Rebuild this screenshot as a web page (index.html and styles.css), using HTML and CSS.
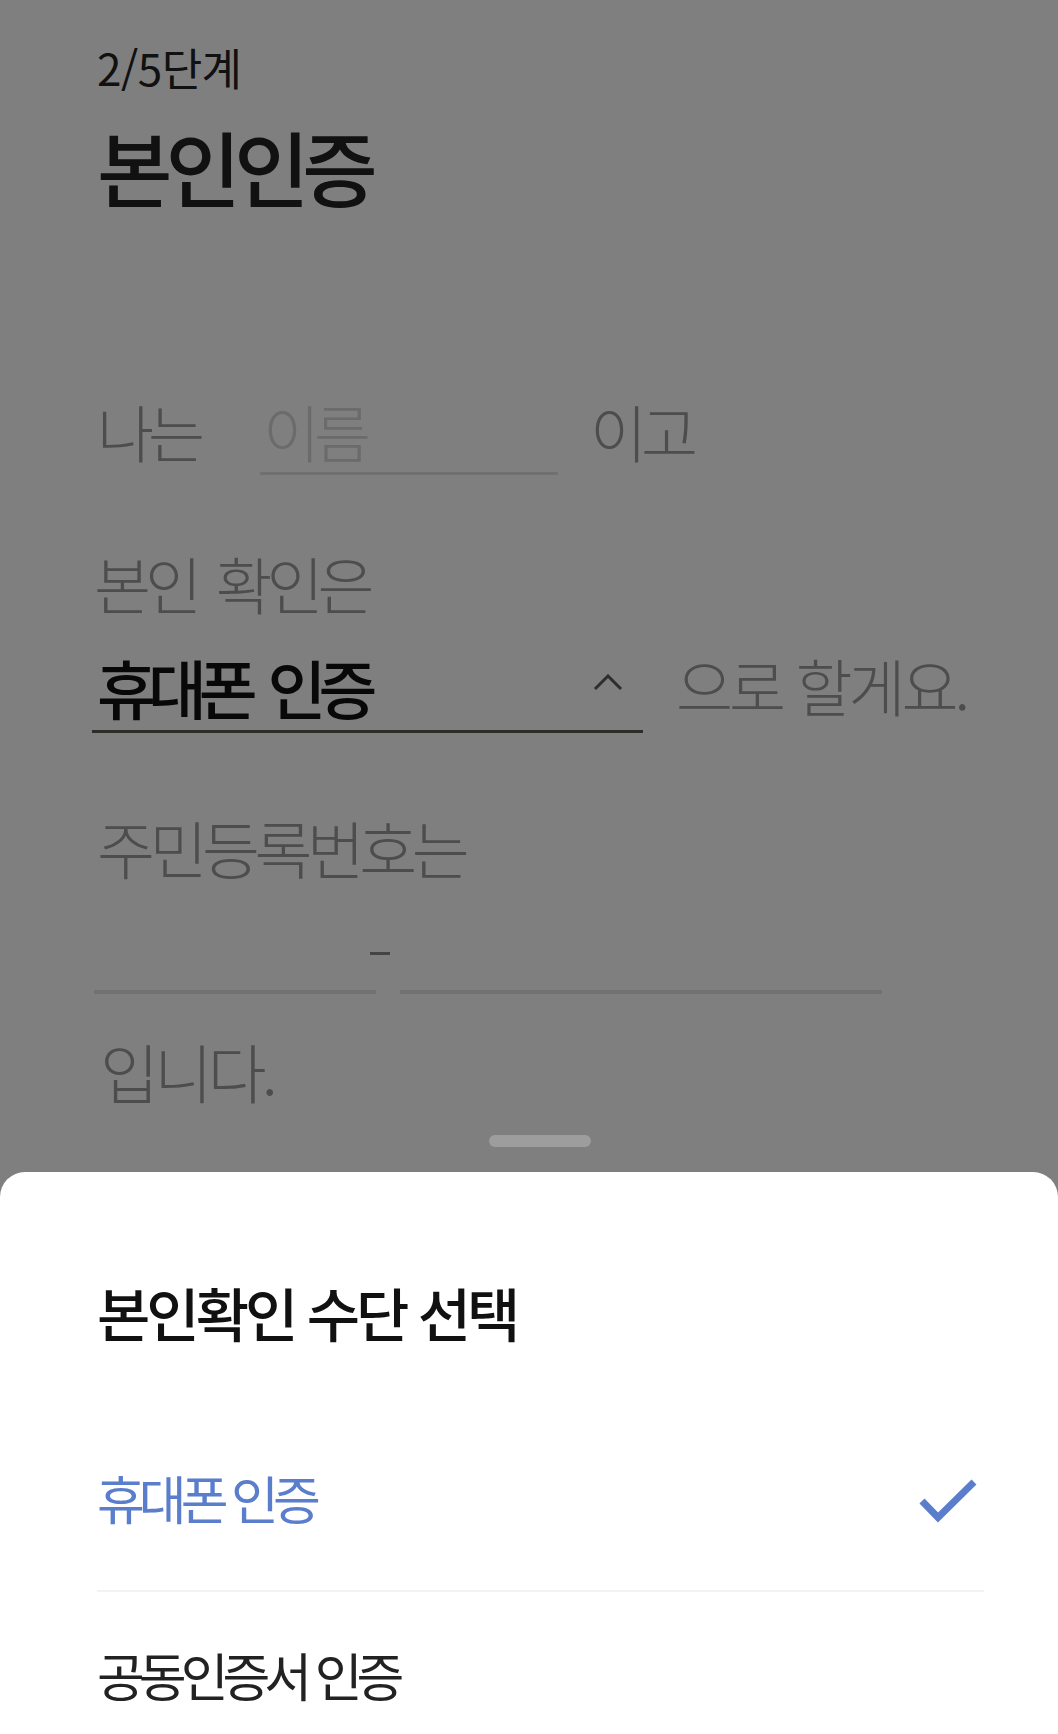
FILE: index.html
```html
<!DOCTYPE html>
<html lang="ko">
<head>
<meta charset="utf-8">
<title>본인인증</title>
<link rel="stylesheet" href="styles.css">
</head>
<body>
<main class="form">
  <div class="step">2/5단계</div>
  <h1 class="title">본인인증</h1>

  <div class="row row-name">
    <span class="label lead">나는</span>
    <div class="field name-field"><span class="placeholder">이름</span></div>
    <span class="label after-name">이고</span>
  </div>

  <div class="label label-method">본인 확인은</div>

  <div class="row row-method">
    <div class="select">
      <span class="select-value">휴대폰 인증</span>
      <svg class="chevron" width="32" height="18" viewBox="0 0 32 18" aria-hidden="true">
        <polyline points="3,15 16,2 29,15" fill="none" stroke="currentColor" stroke-width="3" stroke-linecap="butt" stroke-linejoin="miter"/>
      </svg>
    </div>
    <span class="label after-select">으로 할게요.</span>
  </div>

  <div class="label label-rrn">주민등록번호는</div>

  <div class="row row-rrn">
    <div class="rrn-field rrn-front"></div>
    <span class="rrn-dash"></span>
    <div class="rrn-field rrn-back"></div>
  </div>

  <div class="label label-end">입니다.</div>
</main>

<div class="overlay">
  <div class="handle"></div>
  <section class="sheet">
    <h2 class="sheet-title">본인확인 수단 선택</h2>
    <ul class="options">
      <li class="option selected">
        <span>휴대폰 인증</span>
        <svg class="check" width="60" height="46" viewBox="0 0 60 46" aria-hidden="true">
          <polyline points="4,23 20,39.5 56,4" fill="none" stroke="currentColor" stroke-width="7" stroke-linecap="butt" stroke-linejoin="miter"/>
        </svg>
      </li>
      <li class="option second">
        <span>공동인증서 인증</span>
      </li>
    </ul>
  </section>
</div>
</body>
</html>
```

FILE: styles.css
```css
* {
  box-sizing: border-box;
}

html, body {
  margin: 0;
  padding: 0;
  background: #ffffff;
}

body {
  width: 1058px;
  height: 1734px;
  overflow: hidden;
  font-family: "Noto Sans CJK KR", "Noto Sans", sans-serif;
  color: #222;
}

.form {
  padding: 45px 0 0 97px;
}

.step {
  font-size: 44px;
  line-height: 1;
  letter-spacing: -0.5px;
  font-weight: 400;
  color: #222;
}

.title {
  margin: 36px 0 0;
  font-size: 82px;
  line-height: 1;
  letter-spacing: -7px;
  font-weight: 500;
  color: #222;
}

.row {
  display: flex;
  align-items: flex-start;
}

.label {
  font-size: 62px;
  line-height: 1;
  letter-spacing: -6px;
  font-weight: 300;
  color: #9a9a9a;
  white-space: nowrap;
}

.row-name {
  margin-top: 193px;
}

.lead {
  flex: 0 0 163px;
}

.name-field {
  flex: 0 0 298px;
  padding: 0 0 10px 3px;
  border-bottom: 3px solid #e0e0e0;
}

.placeholder {
  display: block;
  font-size: 62px;
  line-height: 1;
  letter-spacing: -6px;
  font-weight: 300;
  color: #d6d6d6;
}

.after-name {
  margin-left: 32px;
}

.label-method {
  margin-top: 77px;
  margin-left: -3px;
  word-spacing: 8px;
}

.row-method {
  margin-top: 40px;
}

.select {
  flex: 0 0 551px;
  margin-left: -5px;
  padding: 0 19px 12px 5px;
  border-bottom: 3px solid #5a5a50;
  display: flex;
  align-items: center;
  justify-content: space-between;
}

.select-value {
  font-size: 64px;
  line-height: 1;
  letter-spacing: -8px;
  word-spacing: 8px;
  font-weight: 500;
  color: #111;
}

.chevron {
  color: #5c5c5c;
  margin-top: -6px;
}

.after-select {
  margin-left: 33px;
  letter-spacing: -4px;
}

.label-rrn {
  margin-top: 82px;
  font-size: 63px;
  letter-spacing: -5.5px;
}

.row-rrn {
  margin-top: 36px;
}

.rrn-field {
  height: 80px;
  border-bottom: 4px solid #e4e4e4;
}

.rrn-front {
  margin-left: -3px;
  width: 282px;
}

.rrn-back {
  width: 482px;
}

.rrn-dash {
  margin: 38px 10px 0 -6px;
  width: 20px;
  height: 3px;
  background: #888;
}

.label-end {
  margin-top: 44px;
  padding-left: 3px;
  font-size: 64px;
  letter-spacing: -5px;
}

.overlay {
  position: fixed;
  inset: 0;
  background: rgba(0, 0, 0, 0.5);
  display: flex;
  flex-direction: column;
  justify-content: flex-end;
  align-items: flex-start;
}

.handle {
  width: 102px;
  height: 12px;
  border-radius: 6px;
  background: #9d9d9d;
  margin: 0 0 25px 489px;
}

.sheet {
  width: 100%;
  height: 562px;
  background: #ffffff;
  border-radius: 25px 25px 0 0;
  padding: 111px 74px 0 97px;
}

.sheet-title {
  margin: 0;
  font-size: 58px;
  line-height: 1;
  letter-spacing: -4px;
  font-weight: 500;
  color: #111;
}

.options {
  list-style: none;
  margin: 0;
  padding: 0;
}

.option {
  display: flex;
  justify-content: space-between;
  align-items: flex-start;
  font-size: 52px;
  line-height: 1;
  letter-spacing: -6px;
  font-weight: 400;
  color: #222;
}

.option.selected {
  margin-top: 131px;
  padding-bottom: 66px;
  border-bottom: 2px solid #f2f2f2;
  color: #5a7dcc;
}

.check {
  margin-top: 6px;
  margin-right: 6px;
  color: #5a7dcc;
}

.option.second {
  padding-top: 57px;
}
```
